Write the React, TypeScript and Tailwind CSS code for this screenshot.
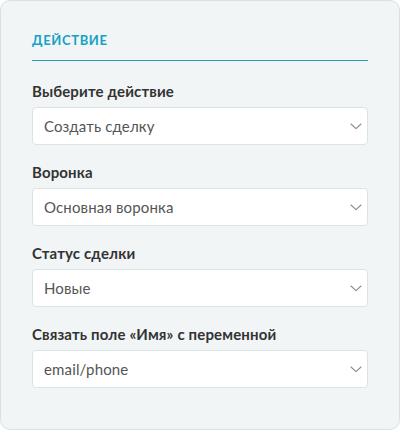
const fields = [
  { label: "Выберите действие", value: "Создать сделку" },
  { label: "Воронка", value: "Основная воронка" },
  { label: "Статус сделки", value: "Новые" },
  { label: "Связать поле «Имя» с переменной", value: "email/phone" },
];

function Chevron() {
  return (
    <svg width="12" height="7" viewBox="0 0 12 7" fill="none" className="text-[#8c8c8c]">
      <path d="M1 1l5 4.6L11 1" stroke="currentColor" strokeWidth="1.1" strokeLinecap="round" strokeLinejoin="round" />
    </svg>
  );
}

function SelectField({ label, value }: { label: string; value: string }) {
  return (
    <div className="flex flex-col">
      <div className="h-5 text-[15px] font-bold leading-5 tracking-[0.01em] text-[#333]">{label}</div>
      <div className="mt-[6px] flex h-[38px] items-center justify-between rounded-[4px] border border-[#d9e4e4] bg-white pl-[11px] pr-[5px]">
        <span className="text-[15px] tracking-[0.01em] text-[#555]">{value}</span>
        <Chevron />
      </div>
    </div>
  );
}

export default function App() {
  return (
    <div
      className="h-[430px] w-[400px] bg-white"
      style={{ fontFamily: "Lato, 'Noto Sans', sans-serif" }}
    >
      <div className="h-[430px] w-[400px] rounded-[10px] border border-[#d7e2e2] bg-[#f1f5f6] px-[31px] pt-[31px]">
        <div className="border-b border-[#2a9cb8] pb-[12px]">
          <h2 className="h-4 text-[13px] font-bold uppercase leading-4 tracking-[0.05em] text-[#17a2c4]">
            Действие
          </h2>
        </div>
        <div className="mt-5 flex flex-col gap-[17px]">
          {fields.map((f) => (
            <SelectField key={f.label} label={f.label} value={f.value} />
          ))}
        </div>
      </div>
    </div>
  );
}
